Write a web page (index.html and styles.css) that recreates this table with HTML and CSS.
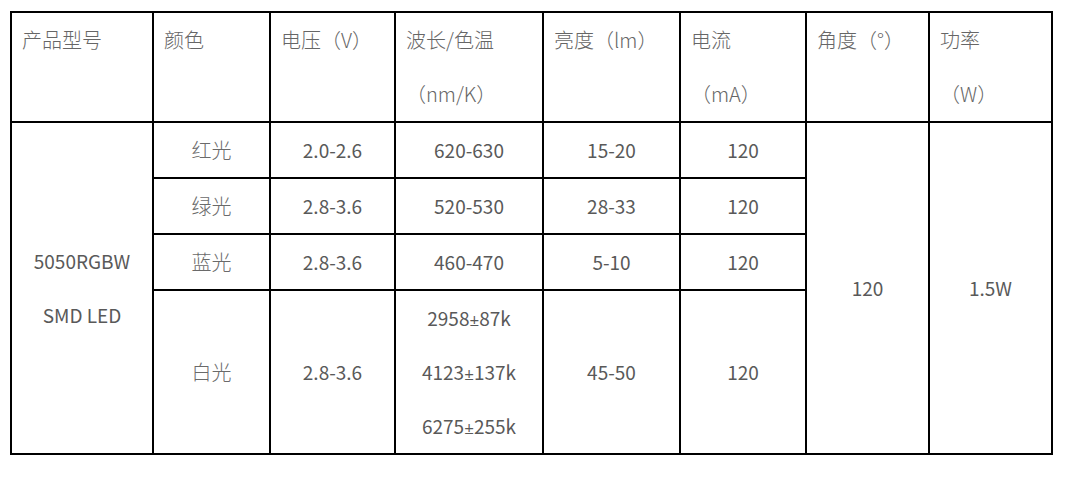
FILE: index.html
```html
<!DOCTYPE html>
<html lang="zh">
<head>
<meta charset="utf-8">
<link rel="stylesheet" href="styles.css">
</head>
<body>
<table class="spec">
  <colgroup>
    <col class="c1"><col class="c2"><col class="c3"><col class="c4"><col class="c5"><col class="c6"><col class="c7"><col class="c8">
  </colgroup>
  <thead>
    <tr>
      <th>产品型号</th>
      <th>颜色</th>
      <th>电压（V）</th>
      <th>波长/色温<br>（nm/K）</th>
      <th>亮度（lm）</th>
      <th>电流<br>（mA）</th>
      <th>角度（°）</th>
      <th>功率<br>（W）</th>
    </tr>
  </thead>
  <tbody>
    <tr>
      <td class="num" rowspan="4">5050RGBW<br>SMD LED</td>
      <td class="zh">红光</td>
      <td class="num">2.0-2.6</td>
      <td class="num">620-630</td>
      <td class="num">15-20</td>
      <td class="num">120</td>
      <td class="num" rowspan="4">120</td>
      <td class="num" rowspan="4">1.5W</td>
    </tr>
    <tr>
      <td class="zh">绿光</td>
      <td class="num">2.8-3.6</td>
      <td class="num">520-530</td>
      <td class="num">28-33</td>
      <td class="num">120</td>
    </tr>
    <tr>
      <td class="zh">蓝光</td>
      <td class="num">2.8-3.6</td>
      <td class="num">460-470</td>
      <td class="num">5-10</td>
      <td class="num">120</td>
    </tr>
    <tr>
      <td class="zh">白光</td>
      <td class="num">2.8-3.6</td>
      <td class="num">2958<span class="pm">±</span>87k<br>4123<span class="pm">±</span>137k<br>6275<span class="pm">±</span>255k</td>
      <td class="num">45-50</td>
      <td class="num">120</td>
    </tr>
  </tbody>
</table>
</body>
</html>
```
FILE: styles.css
```css
html, body {
  margin: 0;
  background: #ffffff;
}
body {
  padding: 11px 0 0 10px;
  font-family: "Noto Sans CJK SC", "Noto Sans", sans-serif;
  font-size: 20px;
  color: #595959;
}
.spec {
  border-collapse: collapse;
  table-layout: fixed;
  width: 1043px;
  border: 2px solid #000;
}
.c1 { width: 142px; }
.c2 { width: 117px; }
.c3 { width: 125px; }
.c4 { width: 148px; }
.c5 { width: 137px; }
.c6 { width: 126px; }
.c7 { width: 123px; }
.c8 { width: 123px; }
.spec th, .spec td {
  border: 2px solid #000;
  padding: 0;
  line-height: 54px;
  font-weight: normal;
}
.spec th {
  text-align: left;
  vertical-align: top;
  padding-left: 10px;
  height: 108px;
  font-weight: 300;
  color: #666666;
}
.spec td {
  text-align: center;
  vertical-align: middle;
  height: 54px;
}
.spec .zh {
  font-weight: 300;
  color: #6a6a6a;
}
.spec .num {
  font-size: 19px;
}
.pm {
  font-family: "Open Sans", "Noto Sans", sans-serif;
  font-size: 17px;
  line-height: 0;
}
```
